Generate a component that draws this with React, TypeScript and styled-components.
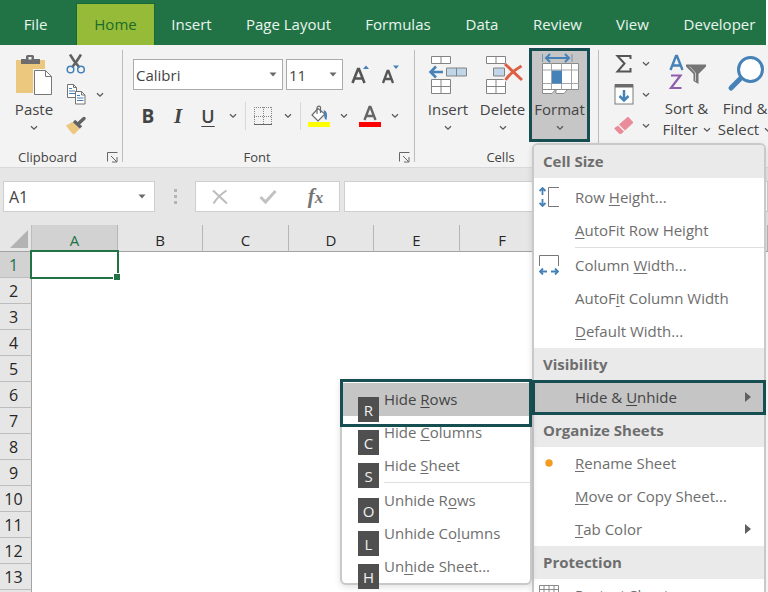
import React from "react";
import styled, { createGlobalStyle, css } from "styled-components";

const teal = "#174e52";
const blue = "#4682b8";
const ink = "#444444";

const GlobalStyle = createGlobalStyle`
  * { box-sizing: border-box; }
  body { margin: 0; font-family: "Open Sans", "Noto Sans", sans-serif; color: ${ink}; }
  button, input, select { font: inherit; color: inherit; }
  button { border: 0; padding: 0; background: none; }
  svg { display: block; flex: none; }
`;

const Page = styled.div`
  height: 100vh;
  overflow: hidden;
  display: flex;
  flex-direction: column;
  background: #ffffff;
  font-size: 15px;
`;

const TabBar = styled.nav`
  display: flex;
  flex: none;
  height: 45px;
  margin-right: 2px;
  padding-top: 4px;
  background: #217346;
  overflow: hidden;
`;

const Tab = styled.button<{ $width: number; $active?: boolean }>`
  flex: none;
  width: ${(p) => p.$width}px;
  padding-bottom: 2px;
  color: #e9f5ee;
  ${(p) =>
    p.$active &&
    css`
      margin-left: 6px;
      background: #95bb38;
      color: #1b6b2c;
      box-shadow: 0 0 0 1px #17693a;
    `}
`;

const Ribbon = styled.section`
  position: relative;
  z-index: 2;
  display: flex;
  flex: none;
  height: 123px;
  background: #f3f3f3;
  border-bottom: 1px solid #d9d9d9;
`;

const Divider = styled.div`
  flex: none;
  width: 1px;
  margin: 5px 0;
  background: #bcbcbc;
`;

const Group = styled.div<{ $width?: number }>`
  display: flex;
  flex-direction: column;
  justify-content: space-between;
  flex: ${(p) => (p.$width ? "none" : "1")};
  width: ${(p) => (p.$width ? `${p.$width}px` : "auto")};
  padding-top: 3px;
`;

const GroupBody = styled.div<{ $indent: number }>`
  display: flex;
  padding-left: ${(p) => p.$indent}px;
`;

const GroupFooter = styled.div`
  display: flex;
  align-items: center;
  height: 20px;
  padding-right: 4px;
  font-size: 13px;
  line-height: 20px;
`;

const FooterName = styled.span`
  flex: 1;
  padding-left: 18px;
`;

const CenteredName = styled.span`
  flex: 1;
  padding-right: 8px;
  text-align: center;
`;

const TallButton = styled.button<{ $width: number; $open?: boolean }>`
  display: flex;
  flex-direction: column;
  align-items: center;
  flex: none;
  width: ${(p) => p.$width}px;
  height: 94px;
  padding-top: 2px;
  border: 3px solid ${(p) => (p.$open ? teal : "transparent")};
  background: ${(p) => (p.$open ? "#c6c6c6" : "transparent")};
  line-height: 20px;
  white-space: nowrap;
`;

const TallLabel = styled.span`
  margin: 4px 0 6px;
`;

const TwoLineLabel = styled.span`
  margin-top: 3px;
  line-height: 21px;
`;

const InlineRow = styled.span`
  display: flex;
  align-items: center;
  gap: 5px;
`;

const SmallColumn = styled.div`
  display: flex;
  flex-direction: column;
`;

const SmallRow = styled.div`
  display: flex;
  align-items: center;
  height: 31px;
`;

const IconButton = styled.button<{ $width?: number }>`
  display: flex;
  align-items: center;
  justify-content: center;
  flex: none;
  width: ${(p) => p.$width ?? 24}px;
  height: 28px;
`;

const FontTools = styled.div`
  display: flex;
  flex-direction: column;
  gap: 12px;
  padding-top: 11px;
`;

const ToolRow = styled.div`
  display: flex;
  align-items: center;
`;

const ThinRule = styled.div`
  width: 1px;
  height: 28px;
  margin: 0 2px 0 2px;
  background: #d8d8d8;
`;

const SelectFrame = styled.label<{ $width: number }>`
  display: flex;
  align-items: center;
  width: ${(p) => p.$width}px;
  height: 31px;
  margin-right: 3px;
  padding-right: 5px;
  border: 1px solid #ababab;
  background: #ffffff;
`;

const PlainSelect = styled.select`
  flex: 1;
  min-width: 0;
  height: 100%;
  padding: 0 2px;
  border: 0;
  appearance: none;
  background: transparent;
  outline: none;
`;

const Bold = styled.span`
  font-size: 19px;
  font-weight: 700;
`;
const Italic = styled.span`
  font-family: "Liberation Serif", serif;
  font-size: 21px;
  font-style: italic;
  font-weight: 700;
`;
const Underlined = styled.span`
  font-size: 18px;
  font-weight: 600;
  text-decoration: underline;
  text-underline-offset: 3px;
  text-decoration-thickness: 1px;
`;

/* Formula bar */

const FormulaBar = styled.section`
  display: flex;
  flex: none;
  height: 57px;
  padding: 13px 0 13px 3px;
  background: #e6e6e6;
`;

const WhiteBox = styled.div<{ $width?: number }>`
  display: flex;
  align-items: center;
  flex: ${(p) => (p.$width ? "none" : "1")};
  width: ${(p) => (p.$width ? `${p.$width}px` : "auto")};
  border: 1px solid #cfcfcf;
  background: #ffffff;
`;

const BarInput = styled.input`
  flex: 1;
  min-width: 0;
  height: 100%;
  padding: 0 5px;
  border: 0;
  outline: none;
  font-size: 16px;
  background: transparent;
`;

const Grip = styled.div`
  display: flex;
  flex-direction: column;
  align-items: center;
  justify-content: center;
  gap: 3px;
  width: 40px;
`;

const GripDot = styled.i`
  width: 3px;
  height: 3px;
  background: #b4b4b4;
`;

const BoxGap = styled.div`
  width: 4px;
`;

/* Grid */

const SheetArea = styled.main`
  flex: 1;
  min-height: 0;
  overflow: hidden;
`;

const Sheet = styled.table`
  border-collapse: separate;
  border-spacing: 0;
  table-layout: fixed;
  width: 100%;
  color: #262626;
`;

const Corner = styled.th`
  width: 32px;
  height: 27px;
  padding: 0 2px 3px 10px;
  vertical-align: bottom;
  background: #e6e6e6;
  border-right: 1px solid #bdbdbd;
  border-bottom: 1px solid #a3a3a3;
`;

const ColumnHead = styled.th<{ $width?: number; $active?: boolean }>`
  width: ${(p) => (p.$width ? `${p.$width}px` : "auto")};
  padding: 3px 0 0;
  font-weight: 400;
  line-height: 20px;
  background: ${(p) => (p.$active ? "#d2d2d2" : "#e6e6e6")};
  color: ${(p) => (p.$active ? "#217346" : "inherit")};
  border-right: 1px solid #b6b6b6;
  border-bottom: 1px solid #a3a3a3;
`;

const RowHead = styled.th<{ $active?: boolean }>`
  height: 26px;
  padding: 0 4px 0 0;
  font-size: 16px;
  font-weight: 400;
  line-height: 22px;
  background: ${(p) => (p.$active ? "#d2d2d2" : "#e6e6e6")};
  color: ${(p) => (p.$active ? "#217346" : "inherit")};
  border-right: 1px solid #a3a3a3;
  border-bottom: 1px solid #bdbdbd;
`;

const Cell = styled.td`
  position: relative;
  padding: 0;
`;

const Selection = styled.div`
  position: absolute;
  inset: -2px -1px -1px -2px;
  border: 2px solid #217346;
`;

const FillHandle = styled.i`
  position: absolute;
  right: -3px;
  bottom: -3px;
  width: 7px;
  height: 7px;
  background: #217346;
  border: 1px solid #ffffff;
  border-width: 1px 0 0 1px;
`;

/* Menus */

const Anchor = styled.div`
  position: relative;
  flex: none;
`;

const menuFrame = css`
  background: #ffffff;
  border: 2px solid #c9c9c9;
  border-radius: 6px;
  box-shadow: 0 2px 6px rgba(0, 0, 0, 0.12);
  color: #6e6e6e;
`;

const Menu = styled.div`
  ${menuFrame}
  position: absolute;
  top: 95px;
  left: 3px;
  width: 234px;
`;

const MenuHeading = styled.div<{ $first?: boolean }>`
  height: 33px;
  padding-left: 9px;
  margin-bottom: ${(p) => (p.$first ? 3 : 0)}px;
  border-radius: ${(p) => (p.$first ? "4px 4px 0 0" : "0")};
  background: #eaeaea;
  font-weight: 700;
  line-height: 33px;
`;

const MenuItem = styled.button<{ $selected?: boolean }>`
  display: flex;
  align-items: center;
  width: 100%;
  height: 33px;
  padding-bottom: 2px;
  text-align: left;
  white-space: nowrap;
  u { text-underline-offset: 2px; text-decoration-thickness: 1px; }
  ${(p) =>
    p.$selected &&
    css`
      color: #444444;
      background: #c5c5c5;
    `}
`;

const IconSlot = styled.span`
  display: flex;
  justify-content: center;
  flex: none;
  width: 30px;
  margin-right: 11px;
`;

const ItemText = styled.span`
  flex: 1;
`;

const ArrowSlot = styled.span`
  padding-right: 13px;
`;

const MenuRule = styled.div<{ $indent: number }>`
  height: 1px;
  margin: 0 0 1px ${(p) => p.$indent}px;
  background: #dedede;
`;

const Frame = styled.div`
  position: absolute;
  inset: -1px -2px -1px -2px;
  border: 3px solid ${teal};
  pointer-events: none;
`;

const RowsFrame = styled.div`
  position: absolute;
  inset: -4px -2px -11px -2px;
  border: 3px solid ${teal};
  pointer-events: none;
`;

const Submenu = styled.div`
  ${menuFrame}
  position: absolute;
  top: -2px;
  right: calc(100% + 2px);
  width: 192px;
  padding-top: 2px;
`;

const SubItem = styled(MenuItem)`
  padding-left: 42px;
`;

const KeyTip = styled.kbd`
  position: absolute;
  left: 16px;
  top: 14px;
  width: 21px;
  height: 25px;
  background: #4f4f4f;
  color: #f0f0f0;
  font-family: inherit;
  font-size: 15px;
  line-height: 26px;
  text-align: center;
`;

/* Icons */

const Chevron = () => (
  <svg width="8" height="6" viewBox="0 0 8 6" fill="none" stroke="#5a5a5a" strokeWidth="1.3">
    <path d="M1 1.2 4 4.2 7 1.2" />
  </svg>
);

const Caret = () => (
  <svg width="8" height="5" viewBox="0 0 8 5" fill="#6a6a6a">
    <path d="M.5.5h7L4 4.5z" />
  </svg>
);

const MenuArrow = () => (
  <svg width="6" height="10" viewBox="0 0 6 10" fill="#606060">
    <path d="M0 0 6 5 0 10z" />
  </svg>
);

const Launcher = () => (
  <svg width="11" height="11" viewBox="0 0 11 11" fill="none" stroke="#666">
    <path d="M.5 9.500V.5h10M4 4l5.500 5.500M10 5v5H5" />
  </svg>
);

const PasteIcon = () => (
  <svg width="38" height="42" viewBox="0 0 38 42">
    <rect x="1" y="7" width="29" height="33" fill="#ecc87e" />
    <path d="M6 6h5V3.500Q11 2 12.500 2h5Q19 2 19 3.500V6h6v5H6z" fill="#6d6d6d" />
    <rect x="13.500" y="4" width="3" height="2.500" fill="#f3f3f3" />
    <path d="M18 16h13l7 7v19H18z" fill="#f3f3f3" />
    <path d="M19.500 17.500h11l6 6v18h-17z" fill="#fff" stroke="#777" />
    <path d="M30.500 17.500v6h6" fill="none" stroke="#777" />
  </svg>
);

const ScissorsIcon = () => (
  <svg width="20" height="20" viewBox="0 0 20 20" fill="none">
    <path d="M4 .5 8.500 7.500l5 6M15 .5 10.500 7.500l-4.500 6" stroke="#626262" strokeWidth="2.600" />
    <circle cx="4.500" cy="15.500" r="3.300" stroke={blue} strokeWidth="1.500" />
    <circle cx="15" cy="15.500" r="3.300" stroke={blue} strokeWidth="1.500" />
  </svg>
);

const CopyIcon = () => (
  <svg width="20" height="21" viewBox="0 0 20 21" fill="#fff" stroke="#737373">
    <path d="M1.500.5h6l3 3v10h-9z" />
    <path d="M7.500.5v3h3" fill="none" />
    <path d="M3 4.500h3M3 7h6M3 9.500h6" stroke={blue} />
    <path d="M9.500 7.500h6l3.500 3.500v9H9.500z" />
    <path d="M15.500 7.500V11H19" fill="none" />
    <path d="M11 11.500h3M11 14h6.500M11 16.500h6.500" stroke={blue} />
  </svg>
);

const BrushIcon = () => (
  <svg width="21" height="19" viewBox="0 0 21 19">
    <path d="M0 9.500 6.500 6l7 7L8 18.500Q5 17 0 9.500z" fill="#ecc87e" />
    <path d="m8 5 7 6.500" stroke="#626262" strokeWidth="3.500" />
    <path d="m12.500 7.500 5.500-5" stroke="#626262" strokeWidth="3.500" strokeLinecap="round" />
  </svg>
);

const GrowFontIcon = () => (
  <svg width="20" height="20" viewBox="0 0 20 20">
    <path d="m1.500 18 5.500-14h1L13.500 18M4 13.500h7" fill="none" stroke="#565656" strokeWidth="2.600" />
    <path d="M12 4 15 .5 18 4z" fill={blue} />
  </svg>
);

const ShrinkFontIcon = () => (
  <svg width="20" height="20" viewBox="0 0 20 20">
    <path d="m2 18 4.500-12h1L12 18M4 14h6" fill="none" stroke="#565656" strokeWidth="2.300" />
    <path d="M12 .5h6L15 4z" fill={blue} />
  </svg>
);

const BordersIcon = () => (
  <svg width="20" height="20" viewBox="0 0 20 20" fill="none" stroke="#858585">
    <path d="M1.500 1v17M10.500 1v17M18.500 1v17M1 1.500h18M1 10.500h18" strokeDasharray="1 1" />
    <path d="M1 18.500h18" stroke="#666" />
  </svg>
);

const FillIcon = () => (
  <svg width="22" height="22" viewBox="0 0 22 22">
    <path d="M10 3.500 4 10l6 6 7-7z" fill="#fff" stroke="#6a6a6a" strokeWidth="1.200" />
    <path d="M9 9V2.500Q10.500 0 12.500 2v6" fill="none" stroke="#6a6a6a" strokeWidth="1.200" />
    <path d="M15.500 5q5 1 3 10-3-1-2-6z" fill={blue} />
    <rect y="17" width="22" height="5" fill="#ffff00" />
  </svg>
);

const FontColorIcon = () => (
  <svg width="22" height="22" viewBox="0 0 22 22">
    <path d="m5.500 15 5-13h1l5 13M7.500 11h7" fill="none" stroke="#666" strokeWidth="2.400" />
    <rect y="17" width="22" height="5" fill="#fe0000" />
  </svg>
);

const InsertIcon = () => (
  <svg width="40" height="42" viewBox="0 0 40 42" fill="#fff" stroke="#838383">
    <path d="M3.500 3.500h19v7h-19zM13 3.500v7M3.500 26.500h19v14h-19zM13 26.500v14M3.500 33.500h19" />
    <path d="M18.500 15h20v8h-20zM28.500 15v8" fill="#c1d5e8" />
    <path d="M15 19H2.500M8 13.500 2.500 19 8 24.500" fill="none" stroke={blue} strokeWidth="2.500" />
  </svg>
);

const DeleteIcon = () => (
  <svg width="40" height="42" viewBox="0 0 40 42" fill="#fff" stroke="#838383">
    <path d="M3.500 3.500h19v7h-19zM13 3.500v7M3.500 26.500h19v14h-19zM13 26.500v14M3.500 33.500h19" />
    <path d="M10.500 15h11v8h-11z" fill="#c1d5e8" />
    <path d="m22 11 18 17M39 12 22 28" fill="none" stroke="#f3f3f3" strokeWidth="5" />
    <path d="m22 11 17 16M38.500 13Q28 19 22.500 27" fill="none" stroke="#dc6043" strokeWidth="3" />
  </svg>
);

const FormatIcon = () => (
  <svg width="40" height="42" viewBox="0 0 40 42">
    <path d="M2.500 1v8M32 1v8" stroke="#7393ae" />
    <path d="M6 5h23M10 1 6 5l4 4M25 1l4 4-4 4" fill="none" stroke={blue} strokeWidth="2" />
    <path d="M2.500 36v4.500H12l4-4.500v4.500h8l4-4.500" fill="#fff" stroke="#8a8a8a" />
    <path d="M2.500 10.500h36v26h-36z" fill="#fff" stroke="#8a8a8a" />
    <path d="M11.500 10.500v26M21.500 10.500v26M31.500 10.500v26M2.500 17h36M2.500 30.500h36" stroke="#a5a5a5" />
    <rect x="12" y="17.500" width="10" height="13" fill={blue} />
  </svg>
);

const SumIcon = () => (
  <svg width="18" height="20" viewBox="0 0 18 20" fill="none" stroke="#555" strokeWidth="2">
    <path d="M15.500 5V2H2.500l7 7.500-7 8h13V14" />
  </svg>
);

const FillDownIcon = () => (
  <svg width="20" height="21" viewBox="0 0 20 21">
    <rect x="1" y="1" width="18" height="19" fill="#fff" stroke="#7a7a7a" />
    <rect x="1" y="0" width="18" height="3.500" fill="#6a6a6a" />
    <path d="M10 6v10.500M5.500 12l4.500 4.500 4.500-4.500" fill="none" stroke={blue} strokeWidth="2.500" />
  </svg>
);

const EraserIcon = () => (
  <svg width="20" height="19" viewBox="0 0 20 19" fill="#e98b98">
    <path d="M5 8.500 13.500 1h1L19 6v1l-8 7.500z" />
    <path d="m4 9.500 6 6-3 2.500H5.500l-5-5V12z" />
  </svg>
);

const SortIcon = () => (
  <svg width="38" height="42" viewBox="0 0 38 42" fill="none">
    <path d="M2.500 17 8 3h1l5.500 14M4.500 12.500h8" stroke={blue} strokeWidth="2.400" />
    <path d="M3 22.500h9.500L3 35h10.500" stroke="#8f5fae" strokeWidth="2.200" />
    <path d="M18 11.500h20v2L30.500 21v10l-5-3v-7L18 13.500z" fill="#757575" />
    <path d="m21.500 13.500 6 6.500v8" stroke="#c8c8c8" />
  </svg>
);

const FindIcon = () => (
  <svg width="38" height="42" viewBox="0 0 38 42" fill="none">
    <path d="m15 25-10 10" stroke={blue} strokeWidth="5" strokeLinecap="round" />
    <circle cx="24.500" cy="16.500" r="12" fill="#fff" stroke={blue} strokeWidth="3" />
  </svg>
);

const CancelIcon = () => (
  <svg width="18" height="16" viewBox="0 0 18 16" fill="none" stroke="#bcbcbc" strokeWidth="2">
    <path d="m2 1.500 14 13M15.500 1.500Q7 7 2.500 14.500" />
  </svg>
);

const EnterIcon = () => (
  <svg width="18" height="16" viewBox="0 0 18 16" fill="none" stroke="#c2c2c2" strokeWidth="3">
    <path d="m1.500 8 5 5L16.500 2" />
  </svg>
);

const FxLabel = styled.span`
  font-family: "Liberation Serif", serif;
  font-size: 21px;
  font-style: italic;
  font-weight: 700;
  line-height: 24px;
  color: #757575;
`;

const FxSmall = styled.span`
  font-size: 17px;
`;

const CornerIcon = () => (
  <svg width="18" height="18" viewBox="0 0 18 18" fill="#b3b3b3">
    <path d="M18 0v18H0z" />
  </svg>
);

const RowHeightIcon = () => (
  <svg width="20" height="20" viewBox="0 0 20 20" fill="none">
    <path d="M3.500 1v7M3.500 12v7M.5 4l3-3 3 3M.5 16l3 3 3-3" stroke={blue} strokeWidth="1.800" />
    <path d="M20 .5H9.500v19H20" stroke="#777" />
  </svg>
);

const ColumnWidthIcon = () => (
  <svg width="20" height="20" viewBox="0 0 20 20" fill="none">
    <path d="M.5 11V.5h19V11" stroke="#777" />
    <path d="M1 16.500h7M12 16.500h7M4 13.500l-3 3 3 3M16 13.500l3 3-3 3" stroke={blue} strokeWidth="1.800" />
  </svg>
);

const DotIcon = () => (
  <svg width="8" height="8" viewBox="0 0 8 8" fill="#f59b23">
    <circle cx="4" cy="4" r="3.700" />
  </svg>
);

const ProtectIcon = () => (
  <svg width="20" height="20" viewBox="0 0 20 20" fill="#fff" stroke="#8a8a8a">
    <path d="M.5.5h19v19H.5zM5 .5v19M10 .5v19M15 .5v19M.5 4.500h19M.5 9h19M.5 14h19" />
  </svg>
);

const tabs = [
  { name: "File", width: 71 },
  { name: "Home", width: 77 },
  { name: "Insert", width: 75 },
  { name: "Page Layout", width: 119 },
  { name: "Formulas", width: 100 },
  { name: "Data", width: 68 },
  { name: "Review", width: 83 },
  { name: "View", width: 67 },
  { name: "Developer", width: 107 },
];

const columns = [
  { name: "A", width: 86 },
  { name: "B", width: 85 },
  { name: "C", width: 86 },
  { name: "D", width: 85 },
  { name: "E", width: 86 },
  { name: "F", width: 85 },
];

const rows = Array.from({ length: 13 }, (_, i) => i + 1);

/** Menu caption with its access key underlined. */
const Caption = ({ text, at }: { text: string; at: number }) => (
  <ItemText>
    {text.slice(0, at)}
    <u>{text[at]}</u>
    {text.slice(at + 1)}
  </ItemText>
);

const Drop = ({ label, width = 20 }: { label: string; width?: number }) => (
  <IconButton $width={width} aria-label={label}>
    <Chevron />
  </IconButton>
);

type EntryProps = { text: string; at: number; icon?: React.ReactNode; arrow?: boolean; selected?: boolean };

const Entry = ({ text, at, icon, arrow, selected }: EntryProps) => (
  <MenuItem role="menuitem" $selected={selected}>
    <IconSlot>{icon}</IconSlot>
    <Caption text={text} at={at} />
    {arrow && (
      <ArrowSlot>
        <MenuArrow />
      </ArrowSlot>
    )}
  </MenuItem>
);

const SubEntry = ({ text, at, tip, selected }: { text: string; at: number; tip: string; selected?: boolean }) => (
  <Anchor>
    <SubItem role="menuitem" $selected={selected}>
      <Caption text={text} at={at} />
    </SubItem>
    {selected && <RowsFrame />}
    <KeyTip>{tip}</KeyTip>
  </Anchor>
);

const FormatMenu = () => (
  <Menu role="menu" aria-label="Format">
    <MenuHeading $first>Cell Size</MenuHeading>
    <Entry text="Row Height..." at={4} icon={<RowHeightIcon />} />
    <Entry text="AutoFit Row Height" at={0} />
    <MenuRule $indent={41} />
    <Entry text="Column Width..." at={7} icon={<ColumnWidthIcon />} />
    <Entry text="AutoFit Column Width" at={5} />
    <Entry text="Default Width..." at={0} />
    <MenuHeading>Visibility</MenuHeading>
    <Anchor>
      <Entry text="Hide & Unhide" at={7} arrow selected />
      <Frame />
      <Submenu role="menu" aria-label="Hide & Unhide">
        <SubEntry text="Hide Rows" at={5} tip="R" selected />
        <SubEntry text="Hide Columns" at={5} tip="C" />
        <SubEntry text="Hide Sheet" at={5} tip="S" />
        <MenuRule $indent={42} />
        <SubEntry text="Unhide Rows" at={8} tip="O" />
        <SubEntry text="Unhide Columns" at={9} tip="L" />
        <SubEntry text="Unhide Sheet..." at={2} tip="H" />
      </Submenu>
    </Anchor>
    <MenuHeading>Organize Sheets</MenuHeading>
    <Entry text="Rename Sheet" at={0} icon={<DotIcon />} />
    <Entry text="Move or Copy Sheet..." at={0} />
    <Entry text="Tab Color" at={0} arrow />
    <MenuHeading>Protection</MenuHeading>
    <Entry text="Protect Sheet..." at={0} icon={<ProtectIcon />} />
  </Menu>
);

export default function App() {
  return (
    <Page>
      <GlobalStyle />
      <TabBar>
        {tabs.map((t) => (
          <Tab key={t.name} $width={t.width} $active={t.name === "Home"}>
            {t.name}
          </Tab>
        ))}
      </TabBar>

      <Ribbon>
        <Group $width={122}>
          <GroupBody $indent={4}>
            <TallButton $width={60}>
              <PasteIcon />
              <TallLabel>Paste</TallLabel>
              <Chevron />
            </TallButton>
            <SmallColumn>
              <SmallRow>
                <IconButton aria-label="Cut"><ScissorsIcon /></IconButton>
              </SmallRow>
              <SmallRow>
                <IconButton aria-label="Copy"><CopyIcon /></IconButton>
                <Drop label="Copy options" width={24} />
              </SmallRow>
              <SmallRow>
                <IconButton aria-label="Format Painter"><BrushIcon /></IconButton>
              </SmallRow>
            </SmallColumn>
          </GroupBody>
          <GroupFooter>
            <FooterName>Clipboard</FooterName>
            <button aria-label="Clipboard settings"><Launcher /></button>
          </GroupFooter>
        </Group>
        <Divider />

        <Group $width={291}>
          <GroupBody $indent={10}>
            <FontTools>
              <ToolRow>
                <SelectFrame $width={150}>
                  <PlainSelect aria-label="Font name">
                    <option>Calibri</option>
                  </PlainSelect>
                  <Caret />
                </SelectFrame>
                <SelectFrame $width={57}>
                  <PlainSelect aria-label="Font size">
                    <option>11</option>
                  </PlainSelect>
                  <Caret />
                </SelectFrame>
                <IconButton $width={30} aria-label="Increase Font Size"><GrowFontIcon /></IconButton>
                <IconButton $width={30} aria-label="Decrease Font Size"><ShrinkFontIcon /></IconButton>
              </ToolRow>
              <ToolRow>
                <IconButton $width={30}><Bold>B</Bold></IconButton>
                <IconButton $width={30}><Italic>I</Italic></IconButton>
                <IconButton $width={30}><Underlined>U</Underlined></IconButton>
                <Drop label="Underline options" />
                <ThinRule />
                <IconButton $width={30} aria-label="Borders"><BordersIcon /></IconButton>
                <Drop label="Border options" />
                <ThinRule />
                <IconButton $width={31} aria-label="Fill Color"><FillIcon /></IconButton>
                <Drop label="Fill colors" />
                <IconButton $width={31} aria-label="Font Color"><FontColorIcon /></IconButton>
                <Drop label="Font colors" />
              </ToolRow>
            </FontTools>
          </GroupBody>
          <GroupFooter>
            <CenteredName>Font</CenteredName>
            <button aria-label="Font settings"><Launcher /></button>
          </GroupFooter>
        </Group>
        <Divider />

        <Group $width={183}>
          <GroupBody $indent={5}>
            <TallButton $width={56}>
              <InsertIcon />
              <TallLabel>Insert</TallLabel>
              <Chevron />
            </TallButton>
            <TallButton $width={53}>
              <DeleteIcon />
              <TallLabel>Delete</TallLabel>
              <Chevron />
            </TallButton>
            <Anchor>
              <TallButton $width={61} $open aria-haspopup="menu" aria-expanded>
                <FormatIcon />
                <TallLabel>Format</TallLabel>
                <Chevron />
              </TallButton>
              <FormatMenu />
            </Anchor>
          </GroupBody>
          <GroupFooter>
            <CenteredName>Cells</CenteredName>
          </GroupFooter>
        </Group>
        <Divider />

        <Group>
          <GroupBody $indent={13}>
            <SmallColumn>
              <SmallRow>
                <IconButton aria-label="AutoSum"><SumIcon /></IconButton>
                <Drop label="AutoSum options" />
              </SmallRow>
              <SmallRow>
                <IconButton aria-label="Fill"><FillDownIcon /></IconButton>
                <Drop label="Fill options" />
              </SmallRow>
              <SmallRow>
                <IconButton aria-label="Clear"><EraserIcon /></IconButton>
                <Drop label="Clear options" />
              </SmallRow>
            </SmallColumn>
            <TallButton $width={61}>
              <SortIcon />
              <TwoLineLabel>
                Sort &amp;
                <InlineRow>Filter <Chevron /></InlineRow>
              </TwoLineLabel>
            </TallButton>
            <TallButton $width={56}>
              <FindIcon />
              <TwoLineLabel>
                Find &amp;
                <InlineRow>Select <Chevron /></InlineRow>
              </TwoLineLabel>
            </TallButton>
          </GroupBody>
        </Group>
      </Ribbon>

      <FormulaBar>
        <WhiteBox $width={152}>
          <BarInput aria-label="Name Box" defaultValue="A1" />
          <IconButton aria-label="Name list"><Caret /></IconButton>
        </WhiteBox>
        <Grip>
          <GripDot />
          <GripDot />
          <GripDot />
        </Grip>
        <WhiteBox $width={145}>
          <IconButton $width={48} aria-label="Cancel"><CancelIcon /></IconButton>
          <IconButton $width={48} aria-label="Enter"><EnterIcon /></IconButton>
          <IconButton $width={47} aria-label="Insert Function">
            <FxLabel>f<FxSmall>x</FxSmall></FxLabel>
          </IconButton>
        </WhiteBox>
        <BoxGap />
        <WhiteBox>
          <BarInput aria-label="Formula" />
        </WhiteBox>
      </FormulaBar>

      <SheetArea>
        <Sheet>
          <thead>
            <tr>
              <Corner aria-label="Select all"><CornerIcon /></Corner>
              {columns.map((c) => (
                <ColumnHead key={c.name} scope="col" $width={c.width} $active={c.name === "A"}>
                  {c.name}
                </ColumnHead>
              ))}
              <ColumnHead />
            </tr>
          </thead>
          <tbody>
            {rows.map((r) => (
              <tr key={r}>
                <RowHead scope="row" $active={r === 1}>{r}</RowHead>
                {columns.map((c) => (
                  <Cell key={c.name}>
                    {r === 1 && c.name === "A" && (
                      <Selection>
                        <FillHandle />
                      </Selection>
                    )}
                  </Cell>
                ))}
                <Cell />
              </tr>
            ))}
            <tr>
              <RowHead />
            </tr>
          </tbody>
        </Sheet>
      </SheetArea>
    </Page>
  );
}
